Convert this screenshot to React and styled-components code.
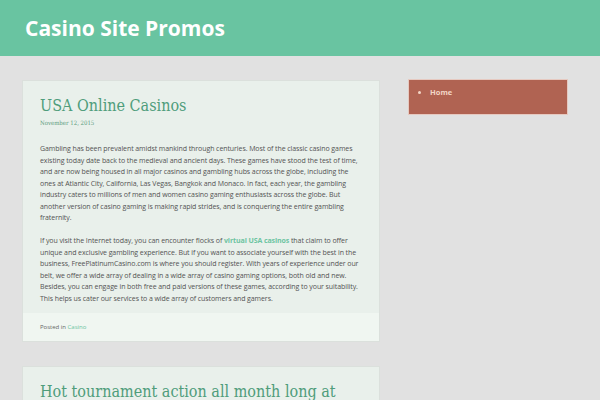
import React from "react";
import styled, { createGlobalStyle } from "styled-components";

const Global = createGlobalStyle`
  html, body { margin: 0; padding: 0; }
  body {
    background: #e1e1e1;
    font-family: "Open Sans", "Liberation Sans", sans-serif;
    width: 600px;
    height: 400px;
    overflow: hidden;
  }
`;

const Header = styled.header`
  height: 56px;
  background: #69c4a1;
  display: flex;
  align-items: center;
  padding: 0 25px;
  box-sizing: border-box;
`;

const SiteTitle = styled.h1`
  margin: 0;
  font-family: "Open Sans", sans-serif;
  font-weight: 700;
  font-size: 21px;
  color: #ffffff;
`;

const Layout = styled.div`
  display: flex;
  align-items: flex-start;
  gap: 28px;
  padding: 24px 0 0 22px;
`;

const Main = styled.main`
  width: 358px;
  display: flex;
  flex-direction: column;
  gap: 24px;
`;

const Card = styled.article`
  background: #e9f0eb;
  border: 1px solid #dbe0dc;
`;

const CardBody = styled.div`
  padding: 15px 16px 9px 17px;
`;

const Title = styled.h2`
  margin: 0;
  font-family: "DejaVu Serif", "Liberation Serif", serif;
  font-stretch: condensed;
  font-weight: 400;
  font-size: 16px;
  line-height: 1.25;
  color: #4f9d7b;
`;

const DateLine = styled.div`
  font-family: "DejaVu Serif", "Liberation Serif", serif;
  font-stretch: condensed;
  font-size: 6px;
  color: #5c9d7e;
  margin-top: 3px;
  margin-bottom: 17px;
`;

const Para = styled.p`
  margin: 0 0 11.5px;
  font-size: 7px;
  letter-spacing: -0.08px;
  line-height: 11.5px;
  color: #535353;
  &:last-child { margin-bottom: 0; }
`;

const Link = styled.a`
  color: #6cc4a1;
  font-weight: ${(p) => (p.$plain ? 400 : 700)};
  text-decoration: none;
`;

const CardFooter = styled.footer`
  background: #f0f6f1;
  padding: 9px 18px 9px 17px;
  font-size: 6px;
  line-height: 10px;
  color: #666;
`;

const Sidebar = styled.aside`
  width: 160px;
  background: #b06352;
  border: 1px solid #e6c9c0;
  box-sizing: border-box;
  padding: 7px 14px 17px;
  margin-top: -1px;
`;

const Menu = styled.ul`
  margin: 0;
  padding: 0 0 0 7px;
  list-style: disc;
  color: #f3d6c6;
`;

const MenuItem = styled.li`
  font-size: 7.5px;
  font-weight: 700;
  line-height: 10px;
  color: #f3d6c6;
`;

export default function App() {
  return (
    <>
      <Global />
      <Header>
        <SiteTitle>Casino Site Promos</SiteTitle>
      </Header>
      <Layout>
        <Main>
          <Card>
            <CardBody>
              <Title>USA Online Casinos</Title>
              <DateLine>November 12, 2015</DateLine>
              <Para>
                Gambling has been prevalent amidst mankind through centuries. Most of the classic casino games
                existing today date back to the medieval and ancient days. These games have stood the test of time,
                and are now being housed in all major casinos and gambling hubs across the globe, including the
                ones at Atlantic City, California, Las Vegas, Bangkok and Monaco. In fact, each year, the gambling
                industry caters to millions of men and women casino gaming enthusiasts across the globe. But
                another version of casino gaming is making rapid strides, and is conquering the entire gambling
                fraternity.
              </Para>
              <Para>
                If you visit the Internet today, you can encounter flocks of <Link>virtual USA casinos</Link> that claim to offer
                unique and exclusive gambling experience. But if you want to associate yourself with the best in the
                business, FreePlatinumCasino.com is where you should register. With years of experience under our
                belt, we offer a wide array of dealing in a wide array of casino gaming options, both old and new.
                Besides, you can engage in both free and paid versions of these games, according to your suitability.
                This helps us cater our services to a wide array of customers and gamers.
              </Para>
            </CardBody>
            <CardFooter>
              Posted in <Link $plain>Casino</Link>
            </CardFooter>
          </Card>
          <Card>
            <CardBody>
              <Title>Hot tournament action all month long at</Title>
            </CardBody>
          </Card>
        </Main>
        <Sidebar>
          <Menu>
            <MenuItem>Home</MenuItem>
          </Menu>
        </Sidebar>
      </Layout>
    </>
  );
}
